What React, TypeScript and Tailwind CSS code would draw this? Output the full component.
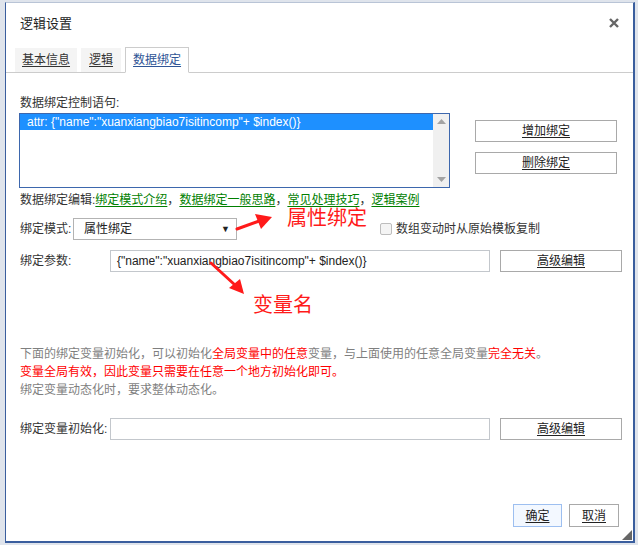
import React from 'react'

const font = "font-['Liberation_Sans','Noto_Sans_CJK_SC',sans-serif]"

const Btn: React.FC<{ label: string; className?: string }> = ({ label, className = '' }) => (
  <button
    className={`h-[22px] border border-[#a9a9a9] bg-white text-[12px] leading-none text-[#222] flex items-center justify-center ${className}`}
  >
    <span className="underline underline-offset-2">{label}</span>
  </button>
)

const App: React.FC = () => {
  return (
    <div className={`relative w-[638px] h-[545px] overflow-hidden bg-[#dfe4ec] pt-[2px] pl-[5px] ${font}`}>
      <div className="w-[630px] h-[541px] bg-white border border-[#3a5e9e] border-t-[#b9c4d6] border-r-2 border-b-2 flex flex-col">
        {/* header */}
        <div className="h-[44px] flex items-start justify-between pl-[14px] pr-[14px] pt-[13px]">
          <span className="text-[13px] leading-[16px] text-[#222]">逻辑设置</span>
          <svg width="10" height="10" viewBox="0 0 10 10" className="mt-[2px]">
            <path d="M1 1 L9 9 M9 1 L1 9" stroke="#666" strokeWidth="2.4" />
          </svg>
        </div>

        {/* tabs */}
        <div className="h-[26px] border-b border-[#cccccc] flex items-end gap-[4px] pl-[9px] text-[12px]">
          <div className="h-[24px] px-[7px] bg-[#f4f4f4] flex items-center text-[#333]">
            <span className="underline underline-offset-2">基本信息</span>
          </div>
          <div className="h-[24px] px-[8px] bg-[#f4f4f4] flex items-center text-[#333]">
            <span className="underline underline-offset-2">逻辑</span>
          </div>
          <div className="h-[26px] -mb-px px-[7px] bg-white border border-[#cccccc] border-b-white flex items-center text-[#2f5596]">
            <span className="underline underline-offset-2">数据绑定</span>
          </div>
        </div>

        {/* body */}
        <div className="flex-1 flex flex-col pl-[14px] pr-[11px] text-[12px] leading-[16px] text-[#333]">
          <div className="mt-[22px]">数据绑定控制语句:</div>
          <div className="flex mt-[2px]">
            <div className="-ml-px w-[431px] h-[75px] border border-[#3d67ad] flex">
              <div className="flex-1">
                <div className="h-[16px] bg-[#1e90ff] text-white pl-[7px] leading-[16px] text-[12px]">
                  attr: {'{'}"name":"xuanxiangbiao7isitincomp"+ $index(){'}'}
                </div>
              </div>
              <div className="w-[16px] bg-[#f0f0f0] flex flex-col items-center justify-between py-[5px]">
                <svg width="9" height="5" viewBox="0 0 9 5">
                  <path d="M0 5 L4.5 0 L9 5 Z" fill="#a3a3a3" />
                </svg>
                <svg width="9" height="5" viewBox="0 0 9 5">
                  <path d="M0 0 L9 0 L4.5 5 Z" fill="#a3a3a3" />
                </svg>
              </div>
            </div>
            <div className="ml-[25px] flex flex-col gap-[10px] pt-[7px]">
              <Btn label="增加绑定" className="w-[142px]" />
              <Btn label="删除绑定" className="w-[142px]" />
            </div>
          </div>

          <div className="mt-[4px]">
            数据绑定编辑:
            <span className="text-[#008000] underline underline-offset-2">绑定模式介绍</span>，
            <span className="text-[#008000] underline underline-offset-2">数据绑定一般思路</span>，
            <span className="text-[#008000] underline underline-offset-2">常见处理技巧</span>，
            <span className="text-[#008000] underline underline-offset-2">逻辑案例</span>
          </div>

          <div className="mt-[10px] flex items-center h-[22px]">
            <span className="w-[53px]">绑定模式:</span>
            <div className="w-[164px] h-[22px] border border-[#b3b3b3] flex items-center justify-between pl-[10px] pr-[6px] text-[#222]">
              <span>属性绑定</span>
              <span className="text-[9px]">▼</span>
            </div>
            <div className="ml-[143px] w-[12px] h-[12px] rounded-[2px] border border-[#bdbdbd] bg-[#f4f4f4]" />
            <span className="ml-[4px]">数组变动时从原始模板复制</span>
          </div>

          <div className="mt-[10px] flex items-center h-[22px]">
            <span className="w-[90px]">绑定参数:</span>
            <div className="w-[380px] h-[22px] border border-[#c3c7cc] flex items-center pl-[6px] text-[12px] text-[#222]">
              {'{'}"name":"xuanxiangbiao7isitincomp"+ $index(){'}'}
            </div>
            <Btn label="高级编辑" className="ml-[10px] w-[122px]" />
          </div>

          <div className="mt-[73px] leading-[18px] text-[#7f7f7f]">
            <div>
              下面的绑定变量初始化，可以初始化<span className="text-[#ff0000]">全局变量中的任意</span>变量，与上面使用的任意全局变量<span className="text-[#ff0000]">完全无关</span>。
            </div>
            <div className="text-[#ff0000]">变量全局有效，因此变量只需要在任意一个地方初始化即可。</div>
            <div>绑定变量动态化时，要求整体动态化。</div>
          </div>

          <div className="mt-[19px] flex items-center h-[22px]">
            <span className="w-[90px]">绑定变量初始化:</span>
            <div className="w-[380px] h-[22px] border border-[#c3c7cc]" />
            <Btn label="高级编辑" className="ml-[10px] w-[122px]" />
          </div>

          <div className="mt-auto mb-[14px] flex justify-end gap-[7px] pr-[3px]">
            <button className="w-[49px] h-[23px] border border-[#9dbff0] bg-[#f3f8ff] text-[12px] text-[#222] flex items-center justify-center">
              <span className="underline underline-offset-2">确定</span>
            </button>
            <button className="w-[50px] h-[23px] border border-[#a9a9a9] bg-white text-[12px] text-[#222] flex items-center justify-center">
              <span className="underline underline-offset-2">取消</span>
            </button>
          </div>
        </div>
      </div>

      {/* resize grip */}
      <svg className="absolute left-[622px] top-[530px]" width="10" height="10" viewBox="0 0 10 10">
        <path d="M10 0 L10 10 L0 10 Z" fill="#666" />
      </svg>

      {/* annotations */}
      <svg className="absolute left-0 top-0 pointer-events-none" width="638" height="545" viewBox="0 0 638 545">
        <path d="M237 229 L262 220" stroke="#ff1a1a" strokeWidth="3" strokeLinecap="round" />
        <path d="M255 214 L272 217 L261 229 Z" fill="#ff1a1a" />
        <path d="M211 263 L235 285" stroke="#ff1a1a" strokeWidth="3" strokeLinecap="round" />
        <path d="M229 288 L244 294 L240 279 Z" fill="#ff1a1a" />
      </svg>
      <div className="absolute left-[287px] top-[206px] text-[20px] leading-[24px] text-[#ff1a1a]">属性绑定</div>
      <div className="absolute left-[253px] top-[293px] text-[20px] leading-[24px] text-[#ff1a1a]">变量名</div>
    </div>
  )
}

export default App
